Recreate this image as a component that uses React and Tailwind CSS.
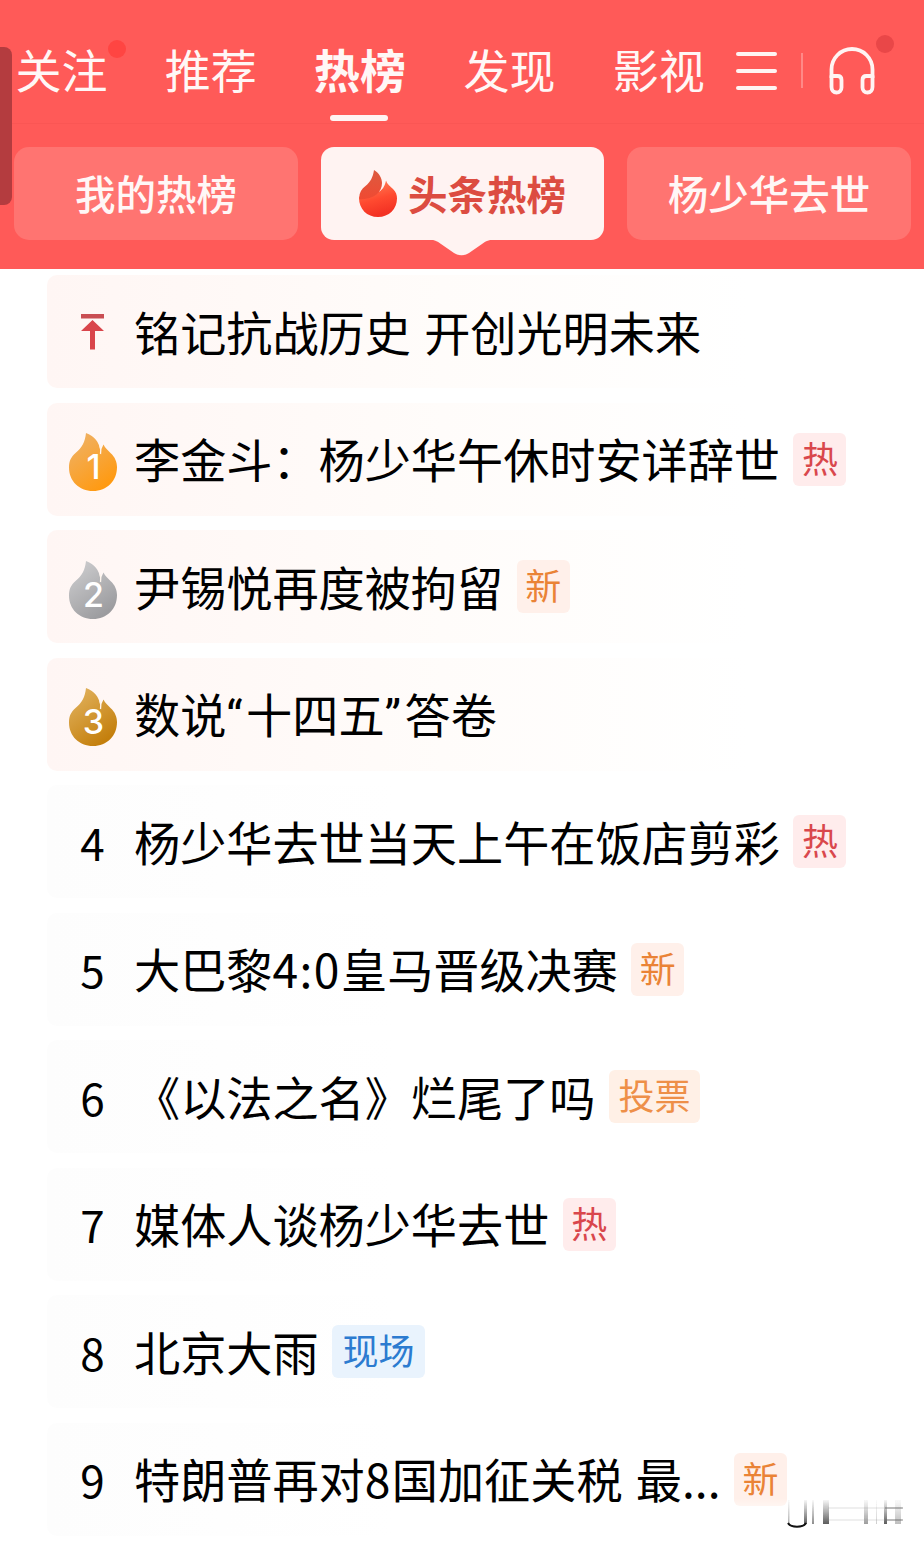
import React, { useState } from "react";

const tabs = [
  { label: "关注", dot: true },
  { label: "推荐" },
  { label: "热榜" },
  { label: "发现" },
  { label: "影视" },
];

const hotList = [
  { title: "铭记抗战历史 开创光明未来", top: true },
  { title: "李金斗：杨少华午休时安详辞世", rank: 1, badge: "热" },
  { title: "尹锡悦再度被拘留", rank: 2, badge: "新" },
  { title: "数说“十四五”答卷", rank: 3 },
  { title: "杨少华去世当天上午在饭店剪彩", rank: 4, badge: "热" },
  { title: "大巴黎4:0皇马晋级决赛", rank: 5, badge: "新" },
  { title: "《以法之名》烂尾了吗", rank: 6, badge: "投票" },
  { title: "媒体人谈杨少华去世", rank: 7, badge: "热" },
  { title: "北京大雨", rank: 8, badge: "现场" },
  { title: "特朗普再对8国加征关税 最...", rank: 9, badge: "新" },
];

const badgeStyles = {
  热: "w-[53px] bg-[#ffecec] text-[#d9474c]",
  新: "w-[53px] bg-[#fff0ea] text-[#ea8336]",
  投票: "w-[91px] bg-[#fff0e6] text-[#ee8f48]",
  现场: "w-[93px] bg-[#e9f3fd] text-[#2c7bd0]",
};

const flameColors = {
  1: ["#f0b060", "#ff9a12"],
  2: ["#c9c9cb", "#9c9c9f"],
  3: ["#dfae58", "#c47f0c"],
};

const RankFlame = ({ rank }) => {
  const [from, to] = flameColors[rank];
  return (
    <div className="relative w-12 h-[58px]">
      <svg width="48" height="58" viewBox="0 0 48 58">
        <defs>
          <linearGradient id={`flame-${rank}`} x1="0" y1="0" x2="0.6" y2="1">
            <stop offset="0.15" stopColor={from} />
            <stop offset="1" stopColor={to} />
          </linearGradient>
        </defs>
        <path
          fill={`url(#flame-${rank})`}
          d="M17 0C25 3 30 8 31.500 18L34.500 11.500C36 15 39 17 41.500 20C46 24 48 29 48 34C48 48 38 58 24 58C10 58 0 48 0 34.500C0 28 2 24 6.500 20C13 15 16 9 17 0Z"
        />
        <path
          d="M31 13Q32.300 17 31.500 21"
          stroke="#fff6ee"
          strokeWidth="1.300"
          fill="none"
        />
      </svg>
      <span className="absolute inset-x-0 top-[17px] pl-0.5 text-center text-[34px] leading-[34px] font-medium text-white font-['Inter','Liberation_Sans',sans-serif]">
        {rank}
      </span>
    </div>
  );
};

const TopArrow = () => (
  <svg width="24" height="36" viewBox="0 0 24 36">
    <path d="M0 0H23V4.500H0Z" fill="#c94e53" />
    <path d="M11.500 6L23 17H14V35.500H9V17H0Z" fill="#d9454b" />
  </svg>
);

const FireLogo = () => (
  <svg width="38" height="47" viewBox="0 0 38 47">
    <defs>
      <linearGradient id="fire-body" x1="0" y1="0" x2="0.3" y2="1">
        <stop offset="0" stopColor="#ff8a60" />
        <stop offset="0.6" stopColor="#ff4a30" />
        <stop offset="1" stopColor="#f33224" />
      </linearGradient>
      <linearGradient id="fire-leaf" x1="0" y1="0" x2="0" y2="1">
        <stop offset="0" stopColor="#dc5a40" />
        <stop offset="1" stopColor="#f04a32" />
      </linearGradient>
    </defs>
    <path
      fill="url(#fire-body)"
      d="M27 10.500C28 14 31 16 34 19C37 22 38 25 38 28.500C38 39 30 47 19 47C8 47 0 39 0 28C0 25 8 22 19 22C23 21 26 16 27 10.500Z"
    />
    <path
      fill="url(#fire-leaf)"
      d="M15 0C20 3 23 8 23 13C23 22 16 29 0.500 29.500C-0.500 24 2 19.500 6.500 16C11.500 12 14 7 15 0Z"
    />
  </svg>
);

const Headphones = () => (
  <svg
    width="48"
    height="50"
    viewBox="0 0 48 50"
    fill="none"
    stroke="#fff4f3"
    strokeWidth="3.800"
    strokeLinejoin="round"
  >
    <path d="M2.500 31V22.500A20.500 20.500 0 0 1 43.500 22.500V31" />
    <path d="M2.500 29H8.500C11.500 29 12.500 30.500 12.500 33V40.500C12.500 43.500 10.500 45.500 7.500 45.500C4.500 45.500 2.500 43 2.500 40Z" />
    <path d="M43.500 29H37.500C34.500 29 33.500 30.500 33.500 33V40.500C33.500 43.500 35.500 45.500 38.500 45.500C41.500 45.500 43.500 43 43.500 40Z" />
  </svg>
);

const Header = ({ activeTab, onChange }) => (
  <header className="h-[269px] bg-[#ff5a58] text-[#fff7f6]">
    <div className="flex items-start h-[124px] pt-[47px] pl-[15.500px] border-b border-[#fa5654]">
      <nav className="flex gap-[57.300px]">
        {tabs.map((tab) => (
          <button
            key={tab.label}
            onClick={() => onChange(tab.label)}
            className={`relative w-[92px] h-[42px] text-[46px] leading-[42px] text-left whitespace-nowrap ${
              activeTab === tab.label ? "font-bold" : "font-normal"
            }`}
          >
            {tab.label}
            {tab.dot && (
              <span className="absolute -top-[7px] left-[92px] size-[18px] rounded-full bg-[#ff4542]" />
            )}
            {activeTab === tab.label && (
              <span className="absolute top-[68px] left-[16px] w-[58px] h-1.5 rounded-full bg-[#fff4f3]" />
            )}
          </button>
        ))}
      </nav>
      <div className="flex flex-col gap-[13px] w-[41px] ml-[31px] mt-[4.500px]">
        <span className="h-1 rounded-full bg-[#fff4f3]" />
        <span className="h-1 rounded-full bg-[#fff4f3]" />
        <span className="h-1 rounded-full bg-[#fff4f3]" />
      </div>
      <span className="w-0.5 h-[35px] ml-6 mt-1.5 bg-[#ff8987]" />
      <div className="relative ml-[26px]">
        <Headphones />
        <span className="absolute -top-[12px] left-[47px] size-[18px] rounded-full bg-[#e94748]" />
      </div>
    </div>

    <div className="flex gap-[23px] pt-[23px] pl-[14px] text-[40.500px] leading-[50px] font-medium">
      <div className="flex items-center justify-center w-[284px] h-[93px] pb-0.5 rounded-[15px] bg-[#ff7471]">
        我的热榜
      </div>
      <div className="relative flex items-center justify-center gap-[11px] w-[283px] h-[93px] rounded-[13px] bg-[#fff3f2] text-[#dc4c41] text-[39.500px] font-bold">
        <FireLogo />
        <span className="pb-px">头条热榜</span>
        <svg
          className="absolute top-[92px] left-[108px]"
          width="66"
          height="17"
          viewBox="0 0 66 17"
        >
          <path
            d="M0 0H66C60 1 57 2 53 5L40 14C35 17 30 17 25 14L12 5C8 2 5 1 0 0Z"
            fill="#fff3f2"
          />
        </svg>
      </div>
      <div className="flex items-center justify-center w-[284px] h-[93px] pb-0.5 rounded-[15px] bg-[#ff7471]">
        杨少华去世
      </div>
    </div>
  </header>
);

// Quotes need a narrow latin face, digits only a little more tracking
const Title = ({ text }) =>
  text.split(/([“”]|[\d:]+)/).map((part, i) => {
    if (/^[“”]$/.test(part)) {
      return (
        <span key={i} className="font-['Roboto'] leading-none tracking-[3.500px]">
          {part}
        </span>
      );
    }
    if (/^[\d:]+$/.test(part)) {
      return (
        <span key={i} className="tracking-[1.500px]">
          {part}
        </span>
      );
    }
    return part;
  });

const HotRow = ({ item }) => {
  const highlighted = item.top || item.rank <= 3;
  return (
    <li
      className={`flex items-center h-[113px] rounded-[10px] ${
        highlighted
          ? "bg-linear-to-r from-[#fff6f4] via-[#fffcfa] via-45% to-white to-80%"
          : "bg-linear-to-r from-[#fdfdfd] to-white to-40%"
      }`}
    >
      <div className="flex items-center justify-center w-[91px] shrink-0">
        {item.top && <TopArrow />}
        {item.rank <= 3 && (
          <div className="pt-1.5">
            <RankFlame rank={item.rank} />
          </div>
        )}
        {item.rank > 3 && (
          <span className="text-[44px] leading-[50px]">{item.rank}</span>
        )}
      </div>
      <span className="ml-[-4px] pb-0.5 text-[46.150px] leading-[56px] whitespace-nowrap [word-spacing:3px]">
        <Title text={item.title} />
      </span>
      {item.badge && (
        <span
          className={`flex items-center justify-center h-[53px] pb-[5px] ml-[13.500px] rounded-md text-[36px] leading-[48px] shrink-0 ${
            badgeStyles[item.badge]
          }`}
        >
          {item.badge}
        </span>
      )}
    </li>
  );
};

// Smudged remains of the stamp in the bottom right corner
const Smudge = () => (
  <svg
    className="absolute left-[730px] top-[1498px]"
    width="174"
    height="32"
    viewBox="0 0 174 32"
  >
    <defs>
      <linearGradient id="smudge-white" x1="0" y1="0" x2="0" y2="1">
        <stop offset="0" stopColor="#fff" stopOpacity="0" />
        <stop offset="0.4" stopColor="#fff" stopOpacity="0.6" />
        <stop offset="1" stopColor="#fff" />
      </linearGradient>
      <linearGradient id="smudge-dark" x1="0" y1="0" x2="0" y2="1">
        <stop offset="0" stopColor="#444" stopOpacity="0.05" />
        <stop offset="1" stopColor="#333" stopOpacity="0.8" />
      </linearGradient>
      <filter id="smudge-soft">
        <feGaussianBlur stdDeviation="0.7 0.3" />
      </filter>
    </defs>
    <rect width="60" height="32" fill="url(#smudge-white)" />
    <g fill="url(#smudge-dark)" filter="url(#smudge-soft)">
      <rect x="58" y="2" width="1.500" height="24" opacity="0.5" />
      <rect x="74" y="2" width="3" height="24" />
      <rect x="82" y="2" width="2" height="24" opacity="0.7" />
      <rect x="93" y="2" width="6" height="24" />
      <rect x="134" y="2" width="4" height="24" opacity="0.6" />
      <rect x="146" y="2" width="1" height="24" opacity="0.3" />
      <rect x="154" y="2" width="3" height="24" />
      <rect x="165" y="2" width="6" height="24" opacity="0.4" />
    </g>
    <path d="M58 25C61 30 73 30 76 25" stroke="#111" strokeWidth="2" fill="none" />
    <path d="M98 10H172M98 22H172" stroke="#999" strokeWidth="1.500" opacity="0.2" />
    <path d="M155 10H173M155 22H173" stroke="#666" strokeWidth="1.500" opacity="0.5" />
  </svg>
);

export default function App() {
  const [activeTab, setActiveTab] = useState("热榜");

  return (
    <div
      lang="zh-CN"
      className="relative w-[924px] h-[1547px] overflow-hidden bg-white text-black font-['Noto_Sans_CJK_SC',sans-serif]"
    >
      <Header activeTab={activeTab} onChange={setActiveTab} />
      <span className="absolute left-0 top-[47px] w-3 h-[158px] rounded-r-lg bg-[#b43c3f]" />
      <ul className="flex flex-col gap-[14.500px] pt-1.5 pl-[47px]">
        {hotList.map((item) => (
          <HotRow key={item.title} item={item} />
        ))}
      </ul>
      <Smudge />
    </div>
  );
}
